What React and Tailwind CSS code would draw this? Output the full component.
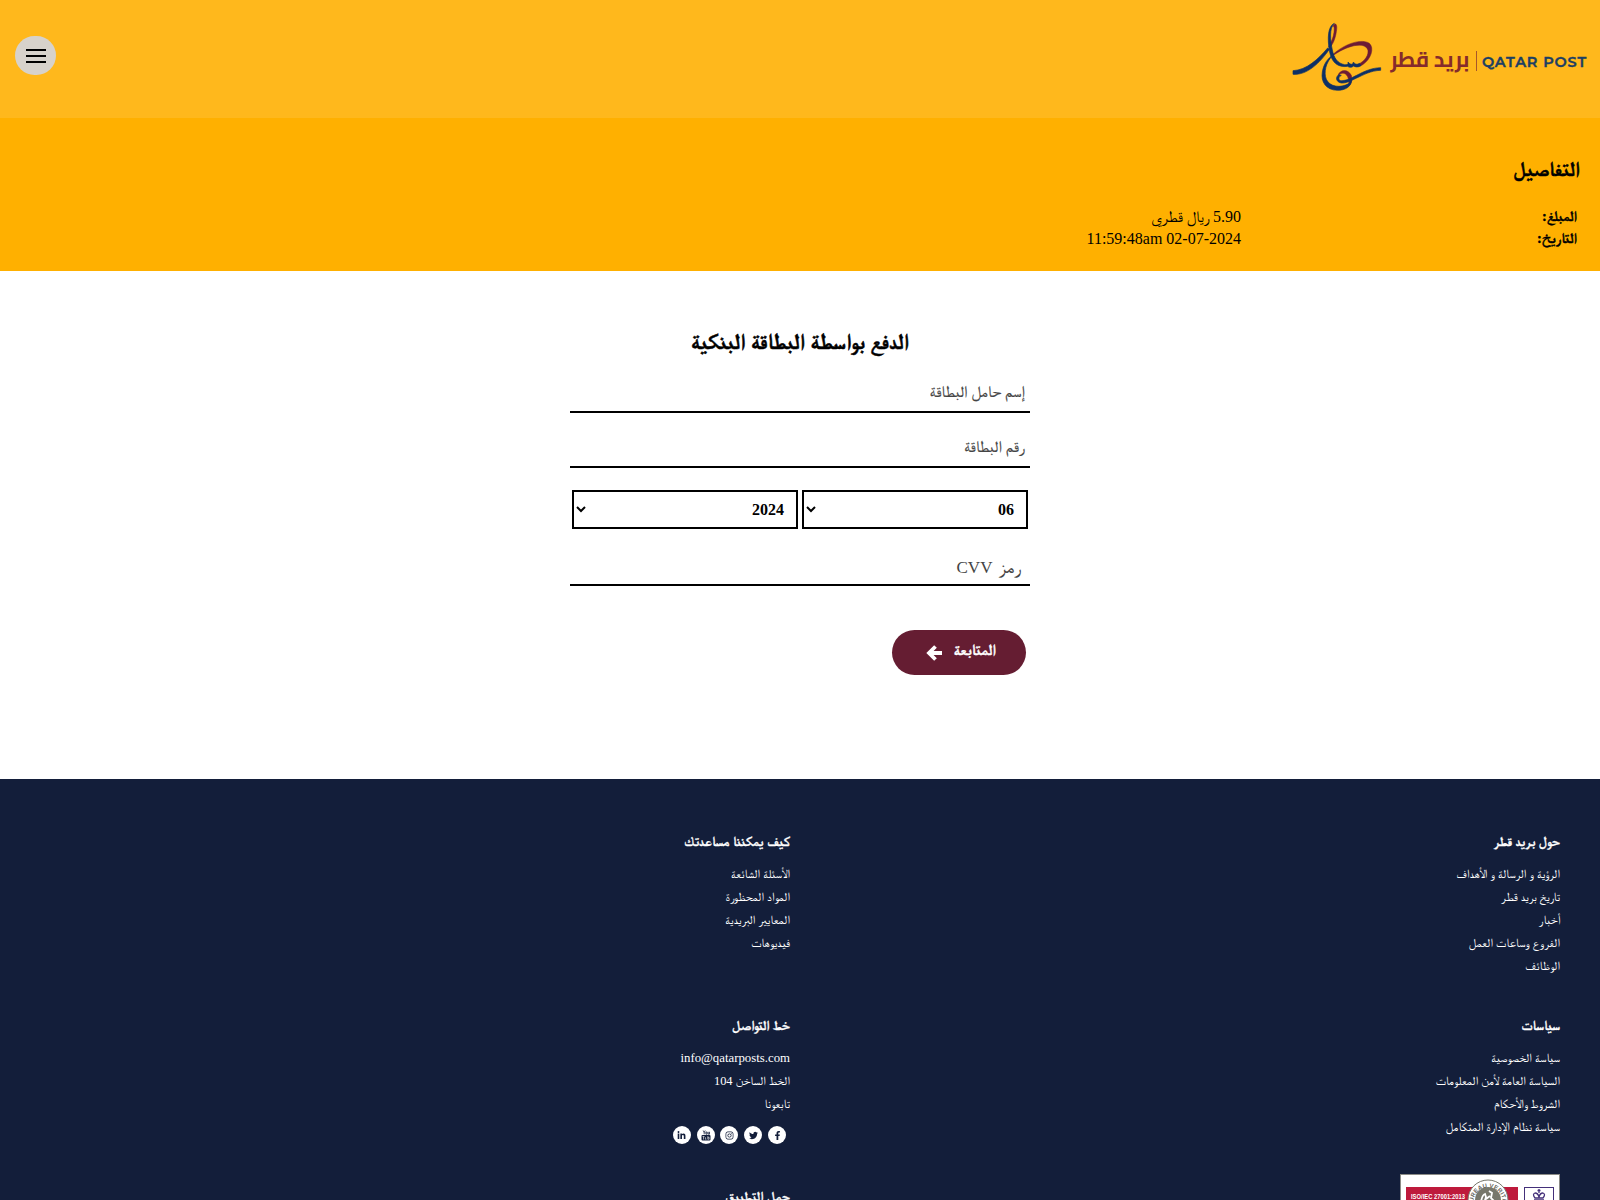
import React from "react";
import { FaFacebookF, FaTwitter, FaInstagram, FaLinkedinIn } from "react-icons/fa";

function YoutubeClassic() {
  return (
    <svg width="10" height="11" viewBox="0 0 10 11" fill="none">
      <path d="M2.2 0.500l1 2v1.800M4.200 0.500l-1 2M4.900 2h1.200v2.200H4.900zM7.200 1.800v2.400h1.300V1.800" stroke="#131e3a" strokeWidth="0.800" />
      <rect x="0.500" y="5" width="9" height="5.500" rx="1" fill="#131e3a" />
      <path d="M1.500 6.500h2M2.500 6.500v3M4.400 7.200v2h1M6.800 6.200v3h1.300V7.300H6.800" stroke="white" strokeWidth="0.600" />
    </svg>
  );
}

function Logo() {
  return (
    <div dir="ltr" className="flex h-[75px] w-[297px] items-center">
      <svg className="h-[75px] w-[100px] shrink-0" viewBox="0 0 300 225" fill="none">
        <g fill="#6d1c35" stroke="#6d1c35" strokeWidth="1.500">
          <path d="M128 20C134 6 144 10 139 35C136 58 127 75 119 84L116 80C124 66 130 53 132 37C134 20 131 17 128 20Z" />
          <path d="M128 104C165 70 215 55 238 70C254 84 243 118 218 134C210 139 200 140 194 138C216 130 236 112 234 92C230 68 185 68 128 107Z" />
          <path d="M144 166C150 148 174 146 184 166C188 180 184 192 176 198C178 180 174 164 162 160C154 158 148 162 144 168Z" />
        </g>
        <g fill="#0d3066" stroke="#0d3066" strokeWidth="2">
          <path d="M9 152C50 150 84 118 113 84L118 88C90 128 52 166 9 163Z" />
          <path d="M133 10C117 24 121 62 127 90C132 114 142 130 164 134C171 135 176 133 174 126C182 136 189 134 190 126C195 134 203 134 208 130L213 137C203 143 196 141 191 138C184 144 177 142 173 139C142 144 124 124 119 96C111 54 114 18 133 10Z" />
          <path d="M130 104C106 128 101 158 109 178C119 200 151 206 178 190L185 180C184 200 166 211 142 211C108 210 92 186 97 156C101 132 112 116 130 104Z" />
          <path d="M154 166C144 170 144 184 156 182C178 180 186 172 200 166C226 152 246 144 272 143V151C242 152 222 164 200 174C180 184 166 190 154 189C136 186 136 168 148 164Z" />
        </g>
      </svg>
      <span dir="rtl" className="mt-[2px] block w-[80px] whitespace-nowrap text-center font-['Cairo','DejaVu_Sans_Condensed',sans-serif] text-[21.5px] font-bold leading-[30px] text-[#862b2b]">بريد قطر</span>
      <span className="mt-[7px] ml-[6px] h-[20px] w-px bg-[#a8572a]" />
      <span className="mt-[8px] ml-[5px] whitespace-nowrap font-['Montserrat','Lato',sans-serif] text-[14.5px] font-semibold leading-[20px] tracking-[0.85px] text-[#1d3f63] [-webkit-text-stroke:0.4px]">QATAR POST</span>
    </div>
  );
}

function IsoBadge() {
  return (
    <div dir="ltr" className="mt-[35px] h-[90px] w-[160px] border border-[#8b8b86] bg-white">
      <svg width="158" height="88" viewBox="0 0 158 88">
        <rect x="5" y="12" width="112" height="60" fill="#be1a3c" />
        <text x="10" y="23.500" textLength="54" lengthAdjust="spacingAndGlyphs" fontFamily="Liberation Sans" fontWeight="bold" fontSize="7.500" fill="white">ISO/IEC 27001:2013</text>
        <circle cx="87" cy="25" r="20" fill="white" stroke="#77776b" strokeWidth="1" />
        <circle cx="87" cy="25" r="13" fill="#77776b" />
        <path id="sealArc" d="M72.500 27A14.500 14.500 0 1 1 101.500 27" fill="none" />
        <text fontFamily="Liberation Sans" fontWeight="bold" fontSize="6" fill="#66665c"><textPath href="#sealArc" textLength="46">UREAU VERITA</textPath></text>
        <path d="M80 27q1-7 4-8l1 3-2 6M88 16l3 2-1 5 4 4M85 24l4-3" stroke="white" strokeWidth="1.800" fill="none" />
        <rect x="123.500" y="12.500" width="29" height="60" fill="white" stroke="#44307a" />
        <g fill="none" stroke="#44307a" strokeWidth="1.300">
          <path d="M138 14v4M136.500 15.500h3M134 23q-3-4 0-5 3 0 4 4 1-4 4-4 3 1 0 5zM133 25h10" />
        </g>
      </svg>
    </div>
  );
}

const socials = [FaFacebookF, FaTwitter, FaInstagram, YoutubeClassic, FaLinkedinIn];

function Column({ title, items, children }) {
  return (
    <section className="w-[770px] text-[12.4px] leading-[23px]">
      <h3 className="mb-[10px] text-[13.5px] font-bold leading-[22px] [-webkit-text-stroke:0.3px]">{title}</h3>
      {items.map((t) => <div key={t} className={t.includes("@") ? "text-[12.8px]" : ""}>{t}</div>)}
      {children}
    </section>
  );
}

export default function App() {
  return (
    <div dir="rtl" className="h-[1200px] w-[1600px] overflow-hidden bg-white font-['Liberation_Serif','FreeSerif',serif] text-black">
      <header className="flex h-[118px] items-start justify-between bg-[#ffb81c] px-[13px] pt-[20px]">
        <Logo />
        <button className="mt-4 ml-[2px] flex h-[39px] w-[41px] flex-col items-center justify-center gap-[4px] rounded-full bg-[#d7d2cb]">
          <span className="h-[2px] w-5 bg-black" /><span className="h-[2px] w-5 bg-black" /><span className="h-[2px] w-5 bg-black" />
        </button>
      </header>
      <section className="h-[153px] bg-[#ffb000] px-[20px] pt-[36px]">
        <h2 className="text-[20.500px] font-bold leading-[30px] [-webkit-text-stroke:0.5px]">التفاصيل</h2>
        <div className="mt-[22px] grid grid-cols-[336px_1fr] pr-[3px] text-[16px] leading-[22px]">
          <b className="-mt-px text-[14.3px] [-webkit-text-stroke:0.4px]">المبلغ:</b><span>5.90 ريال قطري</span>
          <b className="-mt-px text-[14.3px] [-webkit-text-stroke:0.4px]">التاريخ:</b><span>11:59:48am 02-07-2024</span>
        </div>
      </section>
      <main className="h-[508px] pt-[56px]">
        <form className="mx-auto w-[460px]">
          <h2 className="text-center text-[22px] font-bold leading-[30px] [-webkit-text-stroke:0.5px]">الدفع بواسطة البطاقة البنكية</h2>
          <div className="mt-[17px] h-[39px] border-b-2 border-black px-[5px] pt-[7px] text-[16px] leading-[22px] text-[#444] [-webkit-text-stroke:0.2px]">إسم حامل البطاقة</div>
          <div className="mt-[16px] h-[39px] border-b-2 border-black px-[6px] pt-[7px] text-[16px] leading-[22px] text-[#444] [-webkit-text-stroke:0.2px]">رقم البطاقة</div>
          <div className="mt-[22px] flex gap-1 px-[2px]">
            {["06", "2024"].map((v) => (
              <div key={v} className="flex h-[39px] flex-1 items-center justify-between border-2 border-black pr-3 pl-[2px] text-[16px] font-bold">
                {v}
                <svg className="-mt-[2px]" width="10" height="10" viewBox="0 0 10 10" fill="none" stroke="black" strokeWidth="2"><path d="M1 3l4 4 4-4" /></svg>
              </div>
            ))}
          </div>
          <div className="mt-[18px] h-[39px] border-b-2 border-black px-[10px] pt-[9px] text-[17px] leading-[22px] text-[#444] [word-spacing:2px]">
            <span className="text-[19px]">رمز</span> CVV
          </div>
          <div className="mt-[44px] mr-1 flex h-[45px] w-[134px] items-center rounded-full bg-[#651d32] pr-[30px] text-[15.300px] font-bold text-white">
            <span className="-mt-[4px] [-webkit-text-stroke:0.4px]">المتابعة</span>
            <svg className="mt-px mr-3" width="16" height="16" viewBox="0 0 16 16" fill="none" stroke="white" strokeWidth="3.800"><path d="M9.500 1.500L3 8l6.500 6.500M3 8h13" /></svg>
          </div>
        </form>
      </main>
      <footer className="h-[421px] bg-[#131e3a] pt-[52px] pr-[40px] text-white">
        <div className="flex h-[184px]">
          <Column title="حول بريد قطر" items={["الرؤية و الرسالة و الأهداف", "تاريخ بريد قطر", "أخبار", "الفروع وساعات العمل", "الوظائف"]} />
          <Column title="كيف يمكننا مساعدتك" items={["الأسئلة الشائعة", "المواد المحظورة", "المعايير البريدية", "فيديوهات"]} />
        </div>
        <div className="flex">
          <Column title="سياسات" items={["سياسة الخصوصية", "السياسة العامة لأمن المعلومات", "الشروط والأحكام", "سياسة نظام الإدارة المتكامل"]}>
            <IsoBadge />
          </Column>
          <Column title="خط التواصل" items={["info@qatarposts.com", "الخط الساخن 104", "تابعونا"]}>
            <div className="mt-[10px] mr-1 flex gap-[5.8px]">
              {socials.map((I, i) => <span key={i} className="flex size-[18px] items-center justify-center rounded-full bg-white text-[9px] text-[#131e3a]"><I /></span>)}
            </div>
            <h3 className="mt-[42px] text-[13.5px] font-bold leading-[22px] [-webkit-text-stroke:0.3px]">حمل التطبيق</h3>
          </Column>
        </div>
      </footer>
    </div>
  );
}
